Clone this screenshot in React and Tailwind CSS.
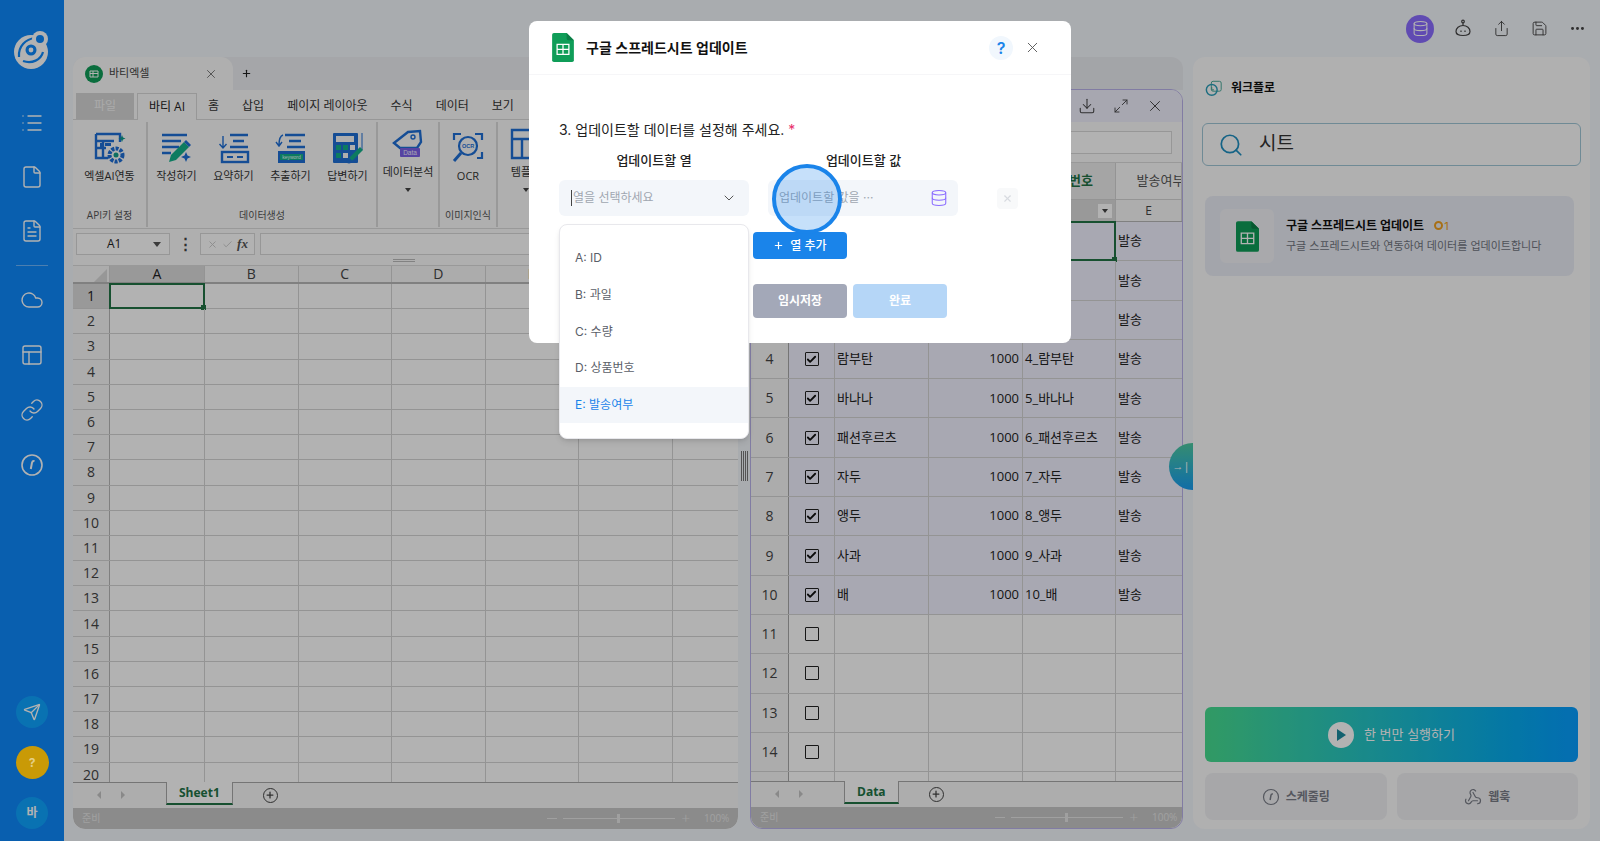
import React from 'react';
import { Check, ChevronDown, Cloud, Database, Download, File, FileText, Link, List, Maximize2, MoreHorizontal, PanelsTopLeft, Plus, Save, Search, Send, Share, Webhook, X } from 'lucide-react';

const cols = ['A', 'B', 'C', 'D', 'E', 'F', 'G'];

const dataRows = [
  ['1', '포도', '1000', '1_포도', '발송'],
  ['2', '딸기', '1000', '2_딸기', '발송'],
  ['3', '망고', '1000', '3_망고', '발송'],
  ['4', '람부탄', '1000', '4_람부탄', '발송'],
  ['5', '바나나', '1000', '5_바나나', '발송'],
  ['6', '패션후르츠', '1000', '6_패션후르츠', '발송'],
  ['7', '자두', '1000', '7_자두', '발송'],
  ['8', '앵두', '1000', '8_앵두', '발송'],
  ['9', '사과', '1000', '9_사과', '발송'],
  ['10', '배', '1000', '10_배', '발송'],
  ['11'], ['12'], ['13'], ['14'], ['15'],
];

const options = ['A: ID', 'B: 과일', 'C: 수량', 'D: 상품번호', 'E: 발송여부'];

const SheetIcon = ({ className }) => (
  <svg viewBox="0 0 24 32" className={className}>
    <path d="M2 0h14l8 8v22a2 2 0 0 1-2 2H2a2 2 0 0 1-2-2V2a2 2 0 0 1 2-2z" fill="#0f9d58" />
    <path d="M16 0l8 8h-6a2 2 0 0 1-2-2z" fill="#0b7d46" />
    <path d="M5.5 12.5h13v11h-13zM5.5 18h13M12 12.5v11" fill="none" stroke="#fff" strokeWidth="1.4" />
  </svg>
);

const Logo = () => (
  <svg viewBox="0 0 36 38" className="w-9 h-[38px]">
    <circle cx="17" cy="21" r="17" fill="#fff" />
    <path d="M5 26C4 15 12 8 21 7" fill="none" stroke="#0e88fb" strokeWidth="2.2" />
    <path d="M9 30c9 3 18-1 20-9" fill="none" stroke="#0e88fb" strokeWidth="2.2" />
    <circle cx="17" cy="19" r="5.5" fill="#0e88fb" />
    <circle cx="17" cy="19" r="2.4" fill="#fff" />
    <circle cx="26" cy="8" r="8" fill="#fff" />
    <circle cx="26" cy="8" r="4" fill="#0e88fb" />
  </svg>
);

const ScheduleIcon = ({ className, color = 'currentColor' }) => (
  <svg viewBox="0 0 24 24" fill="none" stroke={color} strokeWidth="1.6" className={className}>
    <circle cx="12" cy="12" r="10" />
    <path d="M14.5 8c-1.4-.3-2.2.3-2.5 1.6L10.8 16" strokeWidth="2" />
  </svg>
);

const AiLinkIcon = () => (
  <svg viewBox="0 0 32 32" className="w-8 h-8">
    <path d="M2 2h24v8M2 2v24h12M2 9h18M2 16h10M9 9v17" fill="none" stroke="#1f6fd6" strokeWidth="2.4" />
    <path d="M6 11h2v4H6zM11 11h6v3h-6z" fill="#1f6fd6" />
    <path d="M28 3l1 2.5L31.500 6.500 29 7.500 28 10l-1-2.500-2.500-1 2.500-1z" fill="#0d9a8c" />
    <circle cx="22" cy="23" r="6.500" fill="none" stroke="#1f6fd6" strokeWidth="4" strokeDasharray="3 1.200" />
    <circle cx="22" cy="23" r="2.500" fill="#14a08a" />
  </svg>
);

const WriteIcon = () => (
  <svg viewBox="0 0 32 32" className="w-8 h-8">
    <path d="M1 3h25M1 9h19M1 15h17M1 21h9" stroke="#1f6fd6" strokeWidth="2.4" />
    <path d="M8 30l2-7 13-13 5 5-13 13z" fill="#14b08a" />
    <path d="M23 10l2-2 5 5-2 2z" fill="#1f6fd6" />
    <path d="M25 20l1.500 3.500L30 25l-3.500 1.500L25 30l-1.500-3.500L20 25l3.500-1.500z" fill="#1f6fd6" />
  </svg>
);

const SummaryIcon = () => (
  <svg viewBox="0 0 32 32" className="w-8 h-8">
    <path d="M12 3h18M15 9h11M12 15h18" stroke="#1f6fd6" strokeWidth="2.400" fill="none" />
    <path d="M5 4v12M1.500 12L5 16l3.500-4" stroke="#1f6fd6" strokeWidth="1.400" fill="none" />
    <rect x="4" y="20" width="26" height="10" fill="none" stroke="#1f6fd6" strokeWidth="2.400" />
    <path d="M9 25h6M19 25h6" stroke="#1f6fd6" strokeWidth="2" />
  </svg>
);

const ExtractIcon = () => (
  <svg viewBox="0 0 32 32" className="w-8 h-8">
    <path d="M10 3h20M14 9h12M12 15h18" stroke="#1f6fd6" strokeWidth="2.400" fill="none" />
    <path d="M8 3c-3 1-4 5-4 10M1 10l3 4 3-4" stroke="#1f6fd6" strokeWidth="1.400" fill="none" />
    <rect x="3" y="19" width="27" height="12" fill="#1f6fd6" />
    <rect x="5" y="22" width="23" height="6" fill="#14b08a" />
    <text x="16.500" y="27" fontSize="5" textAnchor="middle" fill="#e8fff8" fontFamily="Liberation Sans, sans-serif">keyword</text>
  </svg>
);

const AnswerIcon = () => (
  <svg viewBox="0 0 32 32" className="w-8 h-8">
    <rect x="1" y="1" width="25" height="30" rx="1" fill="#1f6fd6" />
    <rect x="4" y="4" width="18" height="6" fill="#fafafa" />
    <path d="M4 13h5v5H4zM11 13h5v5h-5zM4 21h5v5H4z" fill="#14b08a" />
    <path d="M18 13h5v5h-5zM11 21h5v5h-5z" fill="#fafafa" />
    <path d="M30 1v17" stroke="#1f6fd6" strokeWidth="1" />
    <path d="M16 30l2-5 10-10 3 3-10 10z" fill="#14b08a" />
    <circle cx="17" cy="29" r="2.500" fill="#1f6fd6" />
  </svg>
);

const DataIcon = () => (
  <svg viewBox="0 0 32 30" className="w-8 h-[30px]">
    <path d="M2 15L16 4l12-1 1 11-4 6H8z" fill="none" stroke="#1f6fd6" strokeWidth="2.400" />
    <circle cx="21" cy="9" r="2" fill="none" stroke="#1f6fd6" strokeWidth="1.400" />
    <rect x="8" y="20" width="20" height="9" rx="1" fill="#7b61e8" />
    <text x="18" y="27" fontSize="6.500" textAnchor="middle" fill="#f0ecff" fontFamily="Liberation Sans, sans-serif">Data</text>
  </svg>
);

const OcrIcon = () => (
  <svg viewBox="0 0 32 32" className="w-8 h-8">
    <path d="M2 8V2h7M23 2h7v6M30 20v6h-5" fill="none" stroke="#1f6fd6" strokeWidth="2.200" />
    <circle cx="16" cy="14" r="9" fill="none" stroke="#1f6fd6" strokeWidth="2.200" />
    <path d="M9 21l-7 8" stroke="#1f6fd6" strokeWidth="3" />
    <text x="16" y="16" fontSize="5.500" fontWeight="700" textAnchor="middle" fill="#1f6fd6" fontFamily="Liberation Sans, sans-serif">OCR</text>
  </svg>
);

const TemplateIcon = () => (
  <svg viewBox="0 0 32 32" className="w-8 h-8">
    <path d="M2 2h28v28H2zM2 11h28M12 11v19" fill="none" stroke="#1f6fd6" strokeWidth="2.400" />
  </svg>
);

const RibbonButton = ({ icon, label, width = 'w-[57px]', arrow }) => (
  <div className={`${width} flex flex-col items-center shrink-0`}>
    <div className="h-9 flex items-start justify-center">{icon}</div>
    <span className="text-[11px] leading-4 text-[#333] whitespace-nowrap">{label}</span>
    {arrow && <span className="mt-2 w-0 h-0 border-x-[3.5px] border-x-transparent border-t-[4px] border-t-[#444]" />}
  </div>
);

const RibbonGroup = ({ title, className, children }) => (
  <div className={`${className} h-[105px] mt-0.5 border-r-2 border-[#dcdcdc] flex flex-col shrink-0`}>
    <div className="flex justify-center pt-2.5">{children}</div>
    {title && <span className="mt-auto mb-1 text-[10px] leading-4 text-center text-[#555] whitespace-nowrap">{title}</span>}
  </div>
);

const SheetTabs = ({ name, leftClass, plusClass }) => (
  <div className="h-[26px] bg-[#f8f8f8] border-t border-[#a8a8a8] flex items-start shrink-0">
    <div className={`${leftClass} flex items-center gap-5 h-6 shrink-0`}>
      <span className="w-0 h-0 border-y-[4px] border-y-transparent border-r-[4px] border-r-[#c4c4c4]" />
      <span className="w-0 h-0 border-y-[4px] border-y-transparent border-l-[4px] border-l-[#c4c4c4]" />
    </div>
    <div className="h-[23px] -mt-px px-3 bg-white border-x border-[#a8a8a8] border-b-2 border-b-[#217346] text-xs font-bold text-[#217346] font-['Open_Sans',sans-serif] flex items-center">{name}</div>
    <div className={`${plusClass} h-6 flex items-center`}>
      <span className="w-[15px] h-[15px] rounded-full border-[1.5px] border-[#444] flex items-center justify-center">
        <Plus size={10} strokeWidth={3} className="text-[#444]" />
      </span>
    </div>
  </div>
);

const StatusBar = ({ sliderClass }) => (
  <div className="h-[21px] bg-[#c8c8c8] rounded-b-xl flex items-center shrink-0 text-[10px] text-[#e6e6e6]">
    <span className="pl-[9px]">준비</span>
    <div className={`${sliderClass} flex items-center`}>
      <span className="w-[10px] h-px bg-[#e6e6e6] mr-[6px]" />
      <span className="relative w-[112px] h-px bg-[#e6e6e6]">
        <span className="absolute left-[54px] -top-1 w-[3px] h-[9px] bg-[#e6e6e6]" />
      </span>
      <span className="text-[15px] leading-none font-light ml-[6px] text-[#e6e6e6]">+</span>
      <span className="ml-[14px]">100%</span>
    </div>
  </div>
);

const LeftWindow = () => (
  <section className="w-[665px] shrink-0 flex flex-col font-['Open_Sans','Noto_Sans_CJK_KR',sans-serif]">
    <div className="h-[33px] bg-[#eceef2] rounded-t-xl flex items-stretch shrink-0">
      <div className="w-[160px] bg-[#fbfbfb] rounded-t-xl flex items-center pl-3 pr-[15px]">
        <span className="w-[18px] h-[18px] rounded-full bg-[#0f9d58] flex items-center justify-center">
          <svg viewBox="0 0 10 10" className="w-[10px] h-[10px]"><path d="M1 2h8v6H1zM1 4.500h8M4 2v6" fill="none" stroke="#fff" strokeWidth="1" /></svg>
        </span>
        <span className="ml-1.5 text-[11px] text-[#444]">바티엑셀</span>
        <X size={14} strokeWidth={1.2} className="ml-auto text-[#444]" />
      </div>
      <Plus size={11} strokeWidth={2.5} className="ml-2 self-center text-[#222]" />
    </div>
    <div className="flex-1 bg-[#fbfbfb] rounded-b-xl flex flex-col overflow-hidden">
      <div className="h-[30px] pt-[3px] flex items-stretch text-xs text-[#333] border-b border-[#d8d8d8] shrink-0">
        <div className="ml-[3px] w-[58px] bg-[#d6d6d6] text-[#f4f4f4] flex items-center justify-center">파일</div>
        <div className="ml-[3px] w-[60px] bg-[#fbfbfb] border-x border-t border-[#d8d8d8] -mb-px flex items-center justify-center text-[#222]">바티 AI</div>
        <div className="pl-[11px] flex items-center gap-[23px] whitespace-nowrap">
          <span>홈</span><span>삽입</span><span>페이지 레이아웃</span><span>수식</span><span>데이터</span><span>보기</span>
        </div>
      </div>
      <div className="h-[109px] flex border-b border-[#dcdcdc] shrink-0 overflow-hidden">
        <RibbonGroup title="API키 설정" className="w-[75px]">
          <RibbonButton width="w-[75px]" icon={<AiLinkIcon />} label="엑셀AI연동" />
        </RibbonGroup>
        <RibbonGroup title="데이터생성" className="w-[230px]">
          <RibbonButton icon={<WriteIcon />} label="작성하기" />
          <RibbonButton icon={<SummaryIcon />} label="요약하기" />
          <RibbonButton icon={<ExtractIcon />} label="추출하기" />
          <RibbonButton icon={<AnswerIcon />} label="답변하기" />
        </RibbonGroup>
        <RibbonGroup className="w-[62px]">
          <div className="-mt-1"><RibbonButton width="w-[62px]" icon={<DataIcon />} label="데이터분석" arrow /></div>
        </RibbonGroup>
        <RibbonGroup title="이미지인식" className="w-[58px]">
          <RibbonButton width="w-[58px]" icon={<OcrIcon />} label="OCR" />
        </RibbonGroup>
        <RibbonGroup className="w-[58px]">
          <div className="-mt-1"><RibbonButton width="w-[58px]" icon={<TemplateIcon />} label="템플릿" arrow /></div>
        </RibbonGroup>
      </div>
      <div className="h-[37px] flex items-start pt-1 pl-[3px] pr-2 gap-[5px] relative shrink-0 border-b border-[#dcdcdc]">
        <div className="w-[94px] h-[22px] bg-white border border-[#d8d8d8] flex items-center text-xs text-[#222]">
          <span className="pl-[30px]">A1</span>
          <span className="ml-auto mr-2 w-0 h-0 border-x-[4px] border-x-transparent border-t-[5px] border-t-[#555]" />
        </div>
        <span className="w-5 text-center text-[15px] leading-[20px] font-bold text-[#444]">⋮</span>
        <div className="w-[55px] h-[22px] bg-white border border-[#d8d8d8] flex items-center justify-center gap-1 text-[#c8c8c8]">
          <X size={11} /><Check size={11} />
          <span className="font-['Liberation_Serif',serif] italic font-bold text-[13px] text-[#555]">fx</span>
        </div>
        <div className="flex-1 h-[22px] bg-white border border-[#d8d8d8]" />
        <span className="absolute left-[320px] bottom-[3px] w-[22px] h-[3px] border-y border-[#bbb]" />
      </div>
      <div className="flex-1 min-h-0 overflow-hidden bg-white">
        <div className="flex h-[18px] text-sm text-[#444] bg-[#f6f6f6] border-b-2 border-[#b8b8b8]">
          <div className="w-[37px] shrink-0 relative overflow-hidden border-r border-[#d4d4d4]">
            <span className="absolute right-0.5 bottom-0 w-0 h-0 border-l-[13px] border-l-transparent border-b-[13px] border-b-[#d8d8d8]" />
          </div>
          {cols.map((c, i) => (
            <div key={c} className={`${i === 0 ? 'w-[95px] bg-[#dcdcdc] text-[#222] font-medium' : 'w-[93.500px]'} shrink-0 border-r border-[#d4d4d4] flex items-center justify-center leading-none`}>{c}</div>
          ))}
        </div>
        {Array.from({ length: 20 }, (_, r) => (
          <div key={r} className="flex h-[25.200px] border-b border-[#d4d4d4]">
            <div className={`${r === 0 ? 'bg-[#dcdcdc] font-medium text-[#222]' : 'bg-[#f6f6f6] text-[#444]'} w-[37px] shrink-0 border-r border-[#b8b8b8] flex items-center justify-center text-sm`}>{r + 1}</div>
            {cols.map((c, i) => (
              <div key={c} className={`${i === 0 ? 'w-[95px]' : 'w-[93.500px]'} shrink-0 border-r border-[#d4d4d4] relative`}>
                {r === 0 && i === 0 && (
                  <span className="absolute -inset-px border-2 border-[#217346]">
                    <span className="absolute -right-[3px] -bottom-[3px] w-[5px] h-[5px] bg-[#217346]" />
                  </span>
                )}
              </div>
            ))}
          </div>
        ))}
      </div>
      <SheetTabs name="Sheet1" leftClass="w-[93px] pl-6" plusClass="pl-[30px]" />
      <StatusBar sliderClass="ml-[447px]" />
    </div>
  </section>
);

const Splitter = () => (
  <div className="w-3 shrink-0 flex items-center justify-center gap-px pt-[46px]">
    <span className="w-px h-[30px] bg-[#777]" />
    <span className="w-px h-[30px] bg-[#777]" />
    <span className="w-px h-[30px] bg-[#777]" />
    <span className="w-px h-[30px] bg-[#777]" />
  </div>
);

const CellBox = ({ w, className = '', children }) => (
  <div className={`${w} ${className} shrink-0 border-r border-[#d4d4d4] flex items-center overflow-hidden whitespace-nowrap`}>{children}</div>
);

const RightWindow = () => (
  <section className="w-[433px] shrink-0 flex flex-col font-['Open_Sans','Noto_Sans_CJK_KR',sans-serif]">
    <div className="h-[33px] bg-[#eaecf1] rounded-t-xl shrink-0" />
    <div className="flex-1 min-h-0 -mt-px border border-[#b9b2ea] rounded-xl flex flex-col overflow-hidden bg-[#fbfbfb]">
      <div className="h-[32px] bg-[#efeffd] flex items-center justify-end gap-[17px] pr-[18px] text-[#444] shrink-0">
        <Download size={18} strokeWidth={1.4} />
        <Maximize2 size={16} strokeWidth={1.4} />
        <X size={18} strokeWidth={1.3} />
      </div>
      <div className="h-[41px] flex items-start justify-end pt-[9px] pr-[10px] shrink-0 border-b border-[#dcdcdc]">
        <div className="w-[300px] h-[23px] bg-white border border-[#d8d8d8]" />
      </div>
      <div className="flex-1 min-h-0 overflow-hidden bg-white text-[13px] text-[#222]">
        <div className="flex h-[37px] bg-[#fbfbfb] text-[#555] border-b border-[#d4d4d4]">
          <CellBox w="w-[38px]" /><CellBox w="w-[46px]" />
          <CellBox w="w-[94px]" className="justify-center">과일</CellBox>
          <CellBox w="w-[94px]" className="justify-center">수량</CellBox>
          <CellBox w="w-[93px]" className="justify-center bg-[#ececec] font-bold text-[#217346]">상품번호</CellBox>
          <CellBox w="w-[66px]" className="justify-center pl-6">발송여부</CellBox>
        </div>
        <div className="flex h-[22px] bg-[#f8f8f8] text-xs text-[#444] border-b border-[#b8b8b8]">
          <CellBox w="w-[38px]" /><CellBox w="w-[46px]" className="justify-center">A</CellBox>
          <CellBox w="w-[94px]" className="justify-center">B</CellBox>
          <CellBox w="w-[94px]" className="justify-center">C</CellBox>
          <CellBox w="w-[93px]" className="justify-end bg-[#dcdcdc] pr-[3px]">
            <span className="w-[14px] h-[14px] bg-white flex items-center justify-center">
              <span className="w-0 h-0 border-x-[3.5px] border-x-transparent border-t-[4px] border-t-[#444]" />
            </span>
          </CellBox>
          <CellBox w="w-[66px]" className="justify-center">E</CellBox>
        </div>
        {dataRows.map((row, r) => {
          const filled = row.length > 1;
          return (
            <div key={row[0]} className="flex h-[39.300px] border-b border-[#d4d4d4]">
              <CellBox w="w-[38px]" className="justify-center bg-[#f6f6f6] text-[#444] text-sm !border-[#a8a8a8]">{row[0]}</CellBox>
              <CellBox w="w-[46px]" className={`justify-center ${filled ? 'bg-[#f1f1ff]' : ''}`}>
                <span className="w-3.5 h-3.5 border-[1.5px] border-[#222] rounded-[1px] flex items-center justify-center">
                  {filled && <Check size={11} strokeWidth={4} className="text-[#111]" />}
                </span>
              </CellBox>
              <CellBox w="w-[94px]" className={`pl-[2px] ${filled ? 'bg-[#f1f1ff]' : ''}`}>{row[1]}</CellBox>
              <CellBox w="w-[94px]" className={`justify-end pr-[3px] ${filled ? 'bg-[#f1f1ff]' : ''}`}>{row[2]}</CellBox>
              <CellBox w="w-[93px]" className={`pl-[2px] relative !overflow-visible ${filled ? 'bg-[#f1f1ff]' : ''}`}>
                {row[3]}
                {r === 0 && (
                  <span className="absolute -inset-px border-2 border-[#217346]">
                    <span className="absolute -right-[3px] -bottom-[3px] w-[5px] h-[5px] bg-[#217346]" />
                  </span>
                )}
              </CellBox>
              <CellBox w="w-[66px]" className={`pl-[2px] !border-r-0 ${filled ? 'bg-[#f1f1ff]' : ''}`}>{row[4]}</CellBox>
            </div>
          );
        })}
      </div>
      <SheetTabs name="Data" leftClass="w-[93px] pl-6" plusClass="pl-[30px]" />
      <StatusBar sliderClass="ml-[217px]" />
    </div>
  </section>
);

const WorkflowPanel = () => (
  <aside className="w-[397px] shrink-0 bg-[#fcfcfc] rounded-xl flex flex-col font-['Inter','Noto_Sans_CJK_KR',sans-serif] relative">
    <div className="flex items-center h-[60px] pl-[12px] pt-[2px]">
      <svg viewBox="0 0 20 18" className="w-[18px] h-[17px]">
        <rect x="7" y="1" width="11" height="11" rx="2" fill="none" stroke="#3aa090" strokeWidth="1" />
        <circle cx="7.500" cy="10.500" r="6" fill="none" stroke="#2a9db8" strokeWidth="1.600" />
        <path d="M7.500 7.500v3h2.500" fill="none" stroke="#3aa090" strokeWidth="1" />
      </svg>
      <span className="ml-2 text-xs font-bold text-[#111]">워크플로</span>
    </div>
    <div className="mx-[9px] h-[43px] mt-[6px] border border-[#9fc6d6] rounded-md flex items-center pl-[15px]">
      <Search size={26} strokeWidth={1.6} className="text-[#1f8fc0]" />
      <span className="ml-[15px] text-[19px] text-[#333]">시트</span>
    </div>
    <div className="ml-3 mr-4 h-20 mt-[30px] bg-[#eaedf5] rounded-lg flex items-center pl-[15px]">
      <div className="w-[54px] h-[54px] bg-[#f2f3f7] rounded-md flex items-center justify-center">
        <SheetIcon className="w-[23px] h-[31px]" />
      </div>
      <div className="ml-3">
        <div className="flex items-center">
          <span className="text-xs font-bold text-[#111]">구글 스프레드시트 업데이트</span>
          <span className="ml-[10px] text-[11px] text-[#f0a020] flex items-center gap-px">
            <span className="w-[9px] h-[9px] rounded-full border-2 border-[#f0a020]" />1
          </span>
        </div>
        <p className="mt-1 text-[11px] text-[#70747e] whitespace-nowrap">구글 스프레드시트와 연동하여 데이터를 업데이트합니다</p>
      </div>
    </div>
    <div className="mt-auto px-3 pb-[9px]">
      <div className="h-[55px] rounded-md bg-linear-to-r from-[#47dd8f] to-[#079dff] flex items-center justify-center gap-2.5">
        <span className="w-[26px] h-[26px] rounded-full bg-white flex items-center justify-center">
          <span className="ml-0.5 w-0 h-0 border-y-[6px] border-y-transparent border-l-[9px] border-l-[#1a8ca0]" />
        </span>
        <span className="text-[13px] text-white">한 번만 실행하기</span>
      </div>
      <div className="mt-[11px] grid grid-cols-2 gap-[10px]">
        <div className="h-[47px] rounded-lg bg-[#eff0f3] flex items-center justify-center gap-1.5 text-xs font-bold text-[#7a7d87]">
          <ScheduleIcon className="w-[18px] h-[18px]" />스케줄링
        </div>
        <div className="h-[47px] rounded-lg bg-[#eff0f3] flex items-center justify-center gap-1.5 text-xs font-bold text-[#7a7d87]">
          <Webhook size={18} strokeWidth={1.6} />웹훅
        </div>
      </div>
    </div>
  </aside>
);

const Sidebar = () => (
  <aside className="w-16 shrink-0 bg-[#0e88fb] flex flex-col items-center text-white font-['Inter','Noto_Sans_CJK_KR',sans-serif]">
    <div className="mt-[31px] h-[38px]"><Logo /></div>
    <div className="mt-[42px] flex flex-col items-center gap-[30px]">
      <List size={24} strokeWidth={1.4} />
      <File size={24} strokeWidth={1.4} />
      <FileText size={24} strokeWidth={1.4} />
    </div>
    <div className="mt-[22px] w-8 h-px bg-white/40" />
    <div className="mt-[22px] flex flex-col items-center gap-[31px]">
      <Cloud size={24} strokeWidth={1.4} />
      <PanelsTopLeft size={24} strokeWidth={1.4} />
      <Link size={24} strokeWidth={1.4} />
      <ScheduleIcon className="w-6 h-6" />
    </div>
    <div className="mt-auto mb-[12px] flex flex-col items-center gap-[18px]">
      <span className="w-8 h-8 rounded-full bg-[#0ea4ff] flex items-center justify-center">
        <Send size={18} strokeWidth={1.8} />
      </span>
      <span className="relative z-20 w-[33px] h-[33px] rounded-full bg-[#c99a06] text-[#e4cf86] text-xs font-bold flex items-center justify-center">?</span>
      <span className="w-8 h-8 rounded-full bg-[#0ea4ff] text-xs font-bold flex items-center justify-center">바</span>
    </div>
  </aside>
);

const TopBar = () => (
  <div className="h-[57px] flex items-center justify-end pr-[14px] gap-[21px] text-[#444] shrink-0">
    <span className="w-7 h-7 rounded-full bg-[#8a6cff] text-white flex items-center justify-center -mr-[1px]">
      <Database size={17} strokeWidth={1.5} />
    </span>
    <svg viewBox="0 0 18 18" fill="none" stroke="currentColor" strokeWidth="1.200" className="w-[18px] h-[18px] -mt-0.5">
      <circle cx="9" cy="2.500" r="1.300" />
      <path d="M9 4v2.500" />
      <path d="M2 12.500c0-3.500 3-6 7-6s7 2.500 7 6c0 2.500-3 4-7 4s-7-1.500-7-4z" />
      <path d="M7 11.500v1.500M11 11.500v1.500" />
    </svg>
    <Share size={17} strokeWidth={1.3} />
    <Save size={17} strokeWidth={1.3} />
    <MoreHorizontal size={17} strokeWidth={2.2} />
  </div>
);

const UpdateModal = () => (
  <div className="absolute z-20 left-[529px] top-[21px] w-[542px] h-[322px] bg-white rounded-lg font-['Inter','Noto_Sans_CJK_KR',sans-serif]">
    <div className="h-[54px] flex items-center pl-[23px] pr-[30px] border-b border-[#f6f6f8]">
      <SheetIcon className="w-[22px] h-[29px]" />
      <h2 className="ml-3 text-sm font-semibold text-[#111]">구글 스프레드시트 업데이트</h2>
      <span className="ml-auto w-6 h-6 rounded-full bg-[#f1f7fd] text-[#1a84ea] flex items-center justify-center text-base font-semibold">?</span>
      <X size={17} strokeWidth={1.3} className="ml-[11px] text-[#555]" />
    </div>
    <div className="px-[30px] pt-[45px]">
      <p className="text-sm leading-5 text-[#222]">3. 업데이트할 데이터를 설정해 주세요. <span className="text-[#e8306a]">*</span></p>
      <div className="mt-[10px] flex gap-[19px] text-[13px] leading-5 font-medium text-[#222] text-center">
        <span className="w-[190px] -ml-[5px] mr-[5px] pl-[10px]">업데이트할 열</span>
        <span className="w-[190px] pl-[1px]">업데이트할 값</span>
      </div>
      <div className="mt-[10px] flex items-center gap-[19px]">
        <div className="w-[190px] h-9 bg-[#f3f6fa] rounded-md flex items-center pl-3 pr-3 text-xs text-[#a0a6b0]">
          <span className="w-px h-4 bg-[#444] mr-px" />
          열을 선택하세요
          <ChevronDown size={16} strokeWidth={1.5} className="ml-auto text-[#555]" />
        </div>
        <div className="w-[190px] h-9 bg-[#f3f6fa] rounded-md flex items-center pl-[11px] pr-2.5 text-xs text-[#a0a6b0]">
          업데이트할 값을 ···
          <Database size={18} strokeWidth={1.4} className="ml-auto text-[#8a6cff]" />
        </div>
        <span className="ml-5 w-[21px] h-[21px] bg-[#f8f9fa] rounded flex items-center justify-center text-[#d8dbe0]">
          <X size={11} strokeWidth={2.5} />
        </span>
      </div>
      <button className="ml-[194px] mt-4 w-[94px] h-[27px] bg-[#1a84ea] rounded-[4px] text-white text-xs font-medium flex items-center justify-center gap-1.5">
        <Plus size={11} strokeWidth={2.5} />열 추가
      </button>
      <div className="ml-[194px] mt-[25px] flex gap-1.5 text-xs font-semibold text-white">
        <button className="w-[94px] h-[34px] bg-[#a3a8b8] rounded-[4px]">임시저장</button>
        <button className="w-[94px] h-[34px] bg-[#b5d6f7] rounded-[4px]">완료</button>
      </div>
    </div>
    {/* tutorial spot over the value field */}
    <span className="absolute left-[243px] top-[143px] w-[70px] h-[70px] rounded-full border-4 border-[#1a84ea] bg-[#1a84ea]/25" />
    <div className="absolute left-[30px] top-[203px] w-[190px] h-[215px] bg-white border border-[#e8e8ec] rounded-lg shadow-md pt-[15px] text-xs text-[#5a5e68]">
      {options.map((o, i) => (
        <div key={o} className={`h-[36.700px] pl-[15px] flex items-center ${i === 4 ? 'bg-[#f3f6fa] text-[#1a84ea]' : ''}`}>{o}</div>
      ))}
    </div>
  </div>
);

const App = () => {
  return (
    <div className="relative w-[1600px] h-[841px] overflow-hidden flex bg-[#f3f6fb]">
      <Sidebar />
      <main className="flex-1 min-w-0 flex flex-col">
        <TopBar />
        <div className="flex-1 min-h-0 flex pl-[9px] pr-[10px] pb-3">
          <LeftWindow />
          <Splitter />
          <RightWindow />
          <div className="w-[10px] shrink-0" />
          <WorkflowPanel />
        </div>
      </main>
      <span className="absolute left-[1169px] top-[443px] w-6 h-[47px] rounded-l-full bg-linear-to-b from-[#4ec9a0] to-[#1a9cf0] flex items-center justify-center text-white text-[11px]">→|</span>
      <div className="absolute inset-0 z-10 bg-black/30" />
      <UpdateModal />
    </div>
  );
};

export default App;
